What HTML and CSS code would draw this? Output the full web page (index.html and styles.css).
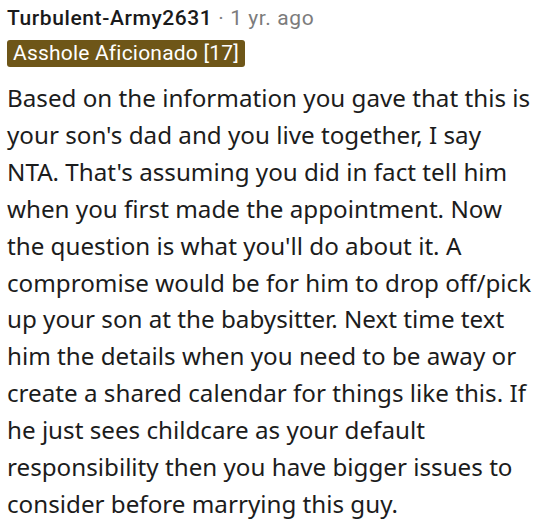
FILE: index.html
```html
<!DOCTYPE html>
<html>
<head>
<meta charset="utf-8">
<link rel="stylesheet" href="styles.css">
</head>
<body>
<div class="comment">
  <div class="header"><span class="author">Turbulent-Army2631</span><span class="meta"> · 1 yr. ago</span></div>
  <div class="flair-row"><span class="flair">Asshole Aficionado [17]</span></div>
  <p class="body">Based on the information you gave that this is your son's dad and you live together, I say NTA. That's assuming you did in fact tell him when you first made the appointment. Now the question is what you'll do about it. A compromise would be for him to drop off/pick up your son at the babysitter. Next time text him the details when you need to be away or create a shared calendar for things like this. If he just sees childcare as your default responsibility then you have bigger issues to consider before marrying this guy.</p>
</div>
</body>
</html>
```
FILE: styles.css
```css
html, body { margin: 0; padding: 0; background: #fff; }
.comment { padding: 3px 0 0 7px; }
.header { font-family: Roboto, "Noto Sans", sans-serif; font-size: 21px; line-height: 30px; letter-spacing: 0.6px; }
.author { color: #1a1a1b; font-weight: 500; }
.meta { color: #7c7c7c; }
.flair-row { margin-top: 7px; line-height: 27px; display: flex; }
.flair { display: inline-block; background: #6e5618; color: #fff; font-family: Roboto, "Noto Sans", sans-serif; font-size: 21px; line-height: 27px; padding: 0 6px; border-radius: 3px; letter-spacing: 0.2px; }
.body { margin: 13px 0 0 0; font-family: "Noto Sans", sans-serif; font-size: 24.2px; line-height: 36.9px; color: #1c1c1c; }
```
